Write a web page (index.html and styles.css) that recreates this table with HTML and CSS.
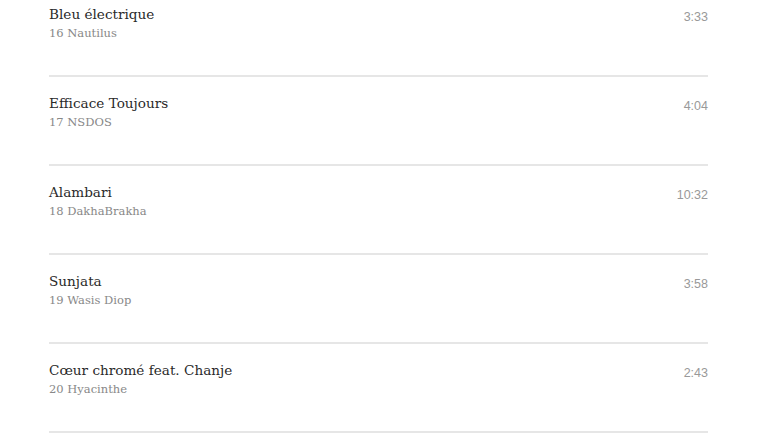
FILE: index.html
```html
<!DOCTYPE html>
<html>
<head>
<meta charset="utf-8">
<link rel="stylesheet" href="styles.css">
</head>
<body>
<ul class="tracks">
  <li class="track">
    <div class="info"><div class="title">Bleu électrique</div><div class="artist">16 Nautilus</div></div>
    <div class="time">3:33</div>
  </li>
  <li class="track">
    <div class="info"><div class="title">Efficace Toujours</div><div class="artist">17 NSDOS</div></div>
    <div class="time">4:04</div>
  </li>
  <li class="track">
    <div class="info"><div class="title">Alambari</div><div class="artist">18 DakhaBrakha</div></div>
    <div class="time">10:32</div>
  </li>
  <li class="track">
    <div class="info"><div class="title">Sunjata</div><div class="artist">19 Wasis Diop</div></div>
    <div class="time">3:58</div>
  </li>
  <li class="track">
    <div class="info"><div class="title">Cœur chromé feat. Chanje</div><div class="artist">20 Hyacinthe</div></div>
    <div class="time">2:43</div>
  </li>
</ul>
</body>
</html>
```
FILE: styles.css
```css
html, body {
  margin: 0;
  padding: 0;
  background: #fff;
  overflow: hidden;
}
.tracks {
  list-style: none;
  margin: -12px 0 0 49px;
  padding: 0;
  width: 659px;
}
.track {
  display: flex;
  justify-content: space-between;
  align-items: flex-start;
  height: 87px;
  border-bottom: 2px solid #e6e6e6;
}
.info {
  padding-top: 16px;
}
.title {
  font-family: "DejaVu Serif", serif;
  font-size: 13.6px;
  line-height: 20px;
  color: #2a2a2a;
}
.artist {
  font-family: "DejaVu Serif", serif;
  font-size: 11.5px;
  line-height: 18px;
  color: #888;
}
.time {
  padding-top: 21px;
  font-family: "Liberation Sans", sans-serif;
  font-size: 12.5px;
  line-height: 16px;
  color: #999;
}
```
